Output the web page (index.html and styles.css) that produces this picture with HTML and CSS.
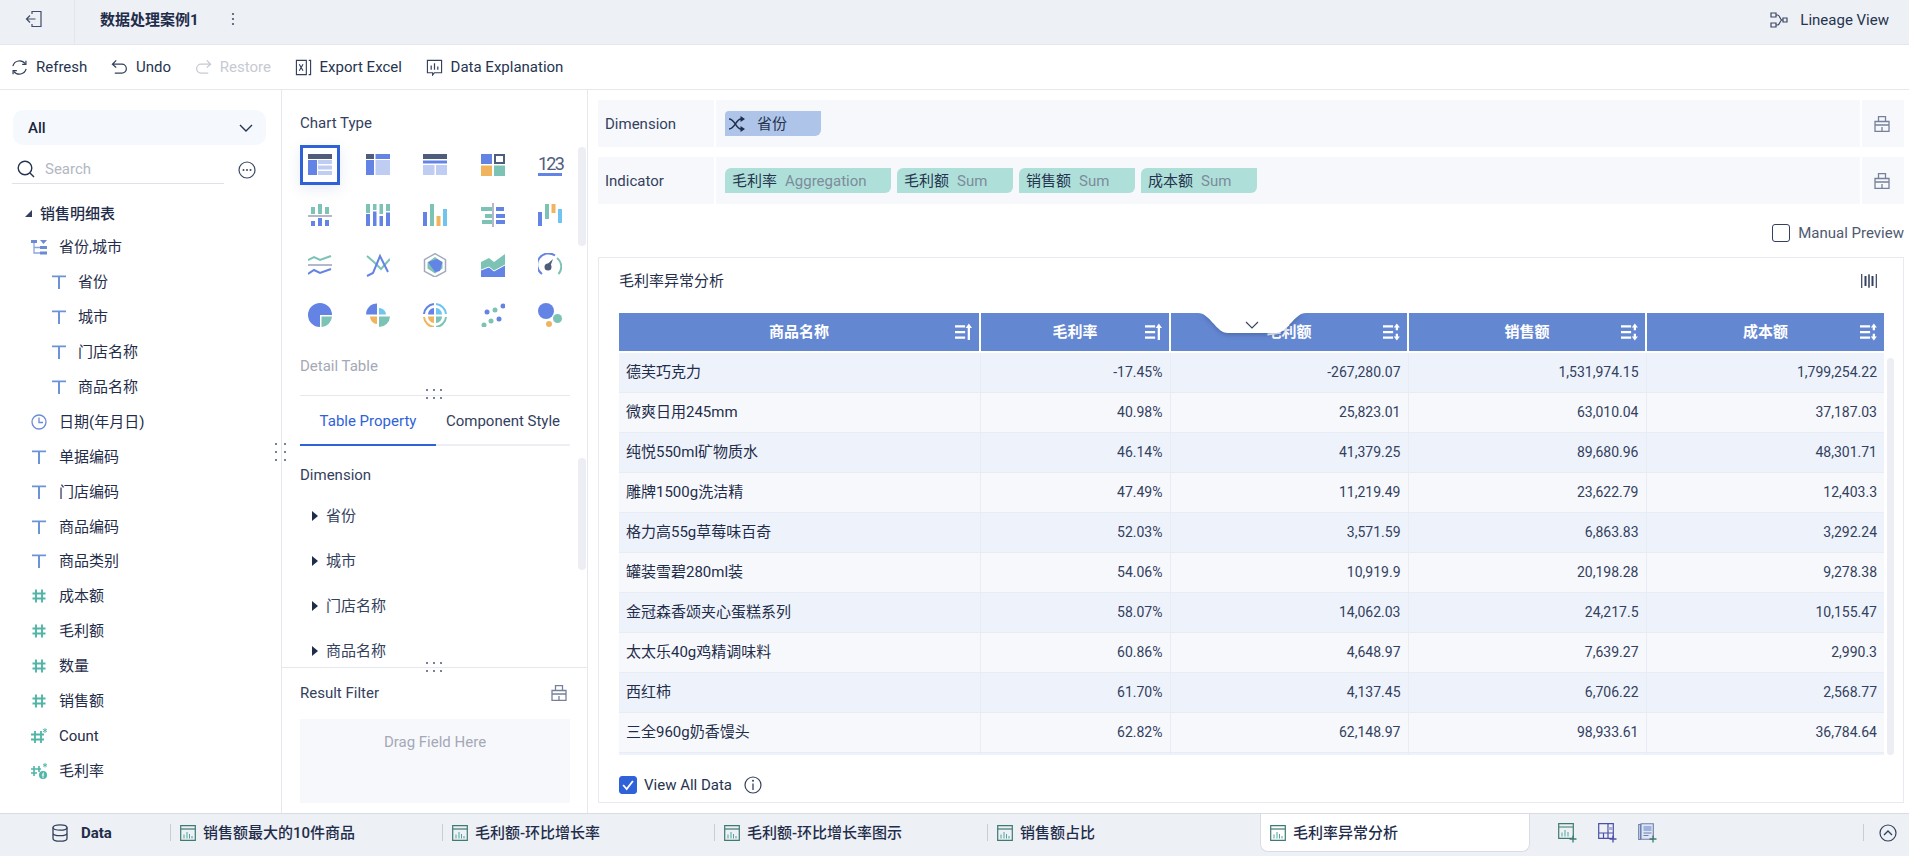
FILE: index.html
```html
<!DOCTYPE html>
<html lang="zh">
<head>
<meta charset="utf-8">
<title>数据处理案例1</title>
<link rel="stylesheet" href="styles.css">
</head>
<body>
<svg class="sprite" aria-hidden="true">
  <symbol id="i-t" viewBox="0 0 16 16"><path d="M1 1.500h14v1.700H1zM7 3h2v12H7z" fill="#6b94d8"/></symbol>
  <symbol id="i-hash" viewBox="0 0 16 16"><path d="M5 1.500v13M11 1.500v13M1.500 5.500h13M1.500 10.500h13" stroke="#4fb5a6" stroke-width="1.900" fill="none"/></symbol>
  <symbol id="i-box" viewBox="0 0 16 16"><path d="M1 5.500h14v9.800H1zM4.500 5.500V.7h7v4.800M1 9h14M8 11v4.300" stroke="#76809a" stroke-width="1.300" fill="none"/></symbol>
  <symbol id="i-tab" viewBox="0 0 16 16"><path d="M.7.7h14.600v14.600H.7z" fill="none" stroke="#3f7a72" stroke-width="1.200"/><path d="M.7 4h14.600" stroke="#3f7a72" stroke-width="1.200"/><path d="M3.500 9.500h1v4h-1zM6.500 7h1v6.500h-1zM9 9h1v4.500H9zM11.500 11h1v2.500h-1z" fill="#4fa79b"/></symbol>
  <symbol id="i-up" viewBox="0 0 16 16"><path d="M0 2h9v2H0zM0 7h9v2H0zM0 12h9v2H0z" fill="#fff"/><path d="M11.300 15V4.500H9.500L12.300.5 15.100 4.500h-1.800V15z" fill="#fff"/></symbol>
  <symbol id="i-both" viewBox="0 0 16 16"><path d="M0 2h9v2H0zM0 7h9v2H0zM0 12h9v2H0z" fill="#fff"/><path d="M12.300.5 15 4h-1.700v2.500h-2V4H9.600zM12.300 15.500 9.600 12h1.700V9.500h2V12H15z" fill="#fff"/></symbol>
</svg>

<header class="topbar">
  <div class="back">
    <svg class="ic18" viewBox="0 0 18 18"><path d="M7 4V1.500h9v15H7V14M1.500 9h9M5 5.500 1.500 9 5 12.500" fill="none" stroke="#3f4d68" stroke-width="1.200"/></svg>
  </div>
  <div class="doc-title">数据处理案例1</div>
  <svg class="doc-more" viewBox="0 0 4 14"><circle cx="2" cy="2" r="1.100" fill="#46536e"/><circle cx="2" cy="7" r="1.100" fill="#46536e"/><circle cx="2" cy="12" r="1.100" fill="#46536e"/></svg>
  <div class="lineage">
    <svg class="ic18" viewBox="0 0 18 18"><path d="M1 2h5v4H1zM1 12h5v4H1zM13 7h4v4h-4zM6 4h1.500c2.500 0 2.500 5 4.500 5h1M6 14h1.500c2.500 0 2.500-5 4.500-5" fill="none" stroke="#3a4864" stroke-width="1.200"/></svg>
    <span>Lineage View</span>
  </div>
</header>

<nav class="toolbar">
  <div class="tool"><svg class="ic17" viewBox="0 0 18 18"><path d="M2 7.500A7.300 7.300 0 0 1 15 5M16 10.500A7.300 7.300 0 0 1 3 13" fill="none" stroke="#33415e" stroke-width="1.300"/><path d="M15.800 1.800v4h-4M2.200 16.200v-4h4" fill="none" stroke="#33415e" stroke-width="1.300"/></svg><span>Refresh</span></div>
  <div class="tool"><svg class="ic17" viewBox="0 0 18 18"><path d="M5.500 1.500 1.500 5.500l4 3.500M1.500 5.500h10a4.700 4.700 0 0 1 0 9.500H4" fill="none" stroke="#33415e" stroke-width="1.300"/></svg><span>Undo</span></div>
  <div class="tool off"><svg class="ic17" viewBox="0 0 18 18"><path d="M12.500 1.500l4 4-4 3.500M16.500 5.500h-10a4.700 4.700 0 0 0 0 9.500H14" fill="none" stroke="#c6cad3" stroke-width="1.300"/></svg><span>Restore</span></div>
  <div class="tool"><svg class="ic17" viewBox="0 0 18 18"><path d="M12 1.500H1.500v15H12zM14.500 1.500h2v15h-2" fill="none" stroke="#33415e" stroke-width="1.200"/><path d="M4.500 5.500l4 7M8.500 5.500l-4 7" fill="none" stroke="#33415e" stroke-width="1.200"/></svg><span>Export Excel</span></div>
  <div class="tool"><svg class="ic17" viewBox="0 0 18 18"><path d="M1.500 1.500h15v13H9l-2 2.500v-2.500H1.500z" fill="none" stroke="#33415e" stroke-width="1.200"/><path d="M5.500 7v4.500M9 4.500v7M12.500 8v3.500" stroke="#33415e" stroke-width="1.300"/></svg><span>Data Explanation</span></div>
</nav>

<main class="workspace">
  <aside class="fields">
    <div class="select"><span>All</span><svg class="chev" viewBox="0 0 14 8"><path d="M1 1l6 6 6-6" fill="none" stroke="#263450" stroke-width="1.400"/></svg></div>
    <div class="search-row">
      <div class="search">
        <svg class="ic18" viewBox="0 0 18 18"><circle cx="8" cy="8" r="6.800" fill="none" stroke="#263450" stroke-width="1.400"/><path d="M13 13l4 4" stroke="#263450" stroke-width="1.400"/></svg>
        <span>Search</span>
      </div>
      <svg class="more" viewBox="0 0 18 18"><circle cx="9" cy="9" r="8" fill="none" stroke="#3a4864" stroke-width="1.200"/><circle cx="5.500" cy="9" r="1" fill="#3a4864"/><circle cx="9" cy="9" r="1" fill="#3a4864"/><circle cx="12.500" cy="9" r="1" fill="#3a4864"/></svg>
    </div>
    <div class="tree-head"><span class="tri-down"></span><span>销售明细表</span></div>
    <div class="row"><svg class="ic16" viewBox="0 0 16 16"><path d="M0 1h6v3H0zM9 1h7L12.500 5zM9 7h7v3H9zM9 12.500h7v3H9z" fill="#6b8bd6"/><path d="M3 4v10h6M3 8.500h6" fill="none" stroke="#8ba4e2" stroke-width="1.300"/></svg><span>省份,城市</span></div>
    <div class="row sub"><svg class="ic16"><use href="#i-t"/></svg><span>省份</span></div>
    <div class="row sub"><svg class="ic16"><use href="#i-t"/></svg><span>城市</span></div>
    <div class="row sub"><svg class="ic16"><use href="#i-t"/></svg><span>门店名称</span></div>
    <div class="row sub"><svg class="ic16"><use href="#i-t"/></svg><span>商品名称</span></div>
    <div class="row"><svg class="ic16" viewBox="0 0 16 16"><circle cx="8" cy="8" r="7" fill="none" stroke="#6b8bd6" stroke-width="1.300"/><path d="M8 3.500V8.500h4" fill="none" stroke="#6b8bd6" stroke-width="1.300"/></svg><span>日期(年月日)</span></div>
    <div class="row"><svg class="ic16"><use href="#i-t"/></svg><span>单据编码</span></div>
    <div class="row"><svg class="ic16"><use href="#i-t"/></svg><span>门店编码</span></div>
    <div class="row"><svg class="ic16"><use href="#i-t"/></svg><span>商品编码</span></div>
    <div class="row"><svg class="ic16"><use href="#i-t"/></svg><span>商品类别</span></div>
    <div class="row"><svg class="ic16"><use href="#i-hash"/></svg><span>成本额</span></div>
    <div class="row"><svg class="ic16"><use href="#i-hash"/></svg><span>毛利额</span></div>
    <div class="row"><svg class="ic16"><use href="#i-hash"/></svg><span>数量</span></div>
    <div class="row"><svg class="ic16"><use href="#i-hash"/></svg><span>销售额</span></div>
    <div class="row"><svg class="ic16" viewBox="0 0 16 16"><path d="M4 3v12M10 3v12M0 6.500h13M0 11.500h13" stroke="#4fb5a6" stroke-width="1.800" fill="none"/><path d="M14 0v5M11.800 1.200l4.400 2.600M16.200 1.200l-4.400 2.600" stroke="#4fb5a6" stroke-width=".9"/></svg><span>Count</span></div>
    <div class="row"><svg class="ic16" viewBox="0 0 16 16"><path d="M3 3v10M8 3v6M0 6h10M0 10h6" stroke="#4fb5a6" stroke-width="1.600" fill="none"/><path d="M14 0v4.500M12 1l4 2.400M16 1l-4 2.400" stroke="#4fb5a6" stroke-width=".9"/><circle cx="12" cy="12" r="4" fill="#4fb5a6"/><path d="M13 10h-1v5M10.800 12h2.400" stroke="#fff" stroke-width=".9" fill="none"/></svg><span>毛利率</span></div>
    <div class="grip grip-v"><i></i><i></i><i></i><i></i><i></i><i></i></div>
  </aside>

  <section class="config">
    <div class="config-top">
      <h4 class="sec-label">Chart Type</h4>
      <div class="charts">
        <div class="chart sel"><svg viewBox="0 0 24 24"><path d="M0 1h24v5H0z" fill="#4f5d7c"/><path d="M0 7h9v15H0z" fill="#6384e4"/><path d="M10 7h14v4H10zM10 12.500h14v4H10zM10 18h14v4H10z" fill="#c0cdf3"/></svg></div>
        <div class="chart"><svg viewBox="0 0 24 24"><path d="M0 1h8v5H0z" fill="#4f5d7c"/><path d="M9.500 1H24v5H9.500zM0 7h8v15H0z" fill="#6384e4"/><path d="M9.500 7H24v15H9.500z" fill="#c0cdf3"/></svg></div>
        <div class="chart"><svg viewBox="0 0 24 24"><path d="M0 1h24v5H0z" fill="#4f5d7c"/><path d="M0 7.500h24v3H0z" fill="#6384e4"/><path d="M0 12h11.500v10H0zM13 12h11v10H13z" fill="#c0cdf3"/></svg></div>
        <div class="chart"><svg viewBox="0 0 24 24"><path d="M0 1h11v10H0z" fill="#6384e4"/><path d="M13 1h11v10H13zM15 3v6h7V3z" fill="#4f5d7c" fill-rule="evenodd"/><path d="M0 12.500h11V23H0z" fill="#f0b45f"/><path d="M13 12.500h11V23H13z" fill="#7cc2b5"/></svg></div>
        <div class="chart"><span class="num">123</span></div>
        <div class="chart"><svg viewBox="0 0 24 24"><path d="M3 4h4v7H3zM10 1h4v10h-4zM17 4h4v7h-4z" fill="#7cc2b5"/><path d="M0 12h24v2H0z" fill="#b3b9ca"/><path d="M3 18h4v5H3zM10 15h4v8h-4zM17 17h4v6h-4z" fill="#6384e4"/></svg></div>
        <div class="chart"><svg viewBox="0 0 24 24"><path d="M0 1h4v9H0zM7 1h3.500v6H7zM13.500 1H17v10h-3.500zM20 1h4v7h-4z" fill="#7cc2b5"/><path d="M0 11h4v12H0zM7 8.500h3.500V23H7zM13.500 13H17v10h-3.500zM20 9.500h4V23h-4z" fill="#6384e4"/></svg></div>
        <div class="chart"><svg viewBox="0 0 24 24"><path d="M0 9h4v14H0z" fill="#6384e4"/><path d="M7 1h4v22H7z" fill="#7cc2b5"/><path d="M13.500 13h4v10h-4z" fill="#f0b45f"/><path d="M20 6h4v17h-4z" fill="#6fc4f0"/></svg></div>
        <div class="chart"><svg viewBox="0 0 24 24"><path d="M0 4h11v4H0zM4 11h7v4H4zM1 17h10v4H1z" fill="#7cc2b5"/><path d="M11 0h2v24h-2z" fill="#b3b9ca"/><path d="M15 4h8v4h-8zM15 11h10v4H15zM15 17h9v4h-9z" fill="#6384e4"/></svg></div>
        <div class="chart"><svg viewBox="0 0 24 24"><path d="M0 9h4v14H0z" fill="#6384e4"/><path d="M7 1h4v15H7z" fill="#7cc2b5"/><path d="M13.500 1h4v9h-4z" fill="#f0b45f"/><path d="M20 6h4v14h-4z" fill="#6fc4f0"/></svg></div>
        <div class="chart"><svg viewBox="0 0 24 24"><path d="M0 7l6-3 6 3 11-4" fill="none" stroke="#7cc2b5" stroke-width="2"/><path d="M0 12h24" stroke="#b3b9ca" stroke-width="2"/><path d="M0 21l6-4 6 3 11-4" fill="none" stroke="#6384e4" stroke-width="2"/></svg></div>
        <div class="chart"><svg viewBox="0 0 24 24"><path d="M1 3l8 7 6 6 9-10" fill="none" stroke="#7cc2b5" stroke-width="2"/><path d="M1 23l6-3 7-17 8 16" fill="none" stroke="#6384e4" stroke-width="2"/></svg></div>
        <div class="chart"><svg viewBox="0 0 24 24"><path d="M12 .7l10.500 6v11.600L12 24 1.500 18.300V6.700z" fill="none" stroke="#a3aabd" stroke-width="1.500"/><path d="M12 4l7.500 5.500v6l-7.500 5-7.500-5v-6z" fill="#7cc2b5"/><path d="M5 9l9-3 5.500 3-2.500 9-5 1z" fill="#6384e4"/></svg></div>
        <div class="chart"><svg viewBox="0 0 24 24"><path d="M0 9l8-4 5 4 11-8v12l-11 6-5-4-8 3z" fill="#7cc2b5"/><path d="M0 24v-7l8-3 5 4 11-6v12z" fill="#6384e4"/><path d="M0 17l8-3 5 4 11-6" fill="none" stroke="#fff"/></svg></div>
        <div class="chart"><svg viewBox="0 0 24 24"><path d="M4 21A11 11 0 0 1 17 2.500" fill="none" stroke="#6384e4" stroke-width="2"/><path d="M19 5a11 11 0 0 1 1.500 16" fill="none" stroke="#7cc2b5" stroke-width="2"/><circle cx="10" cy="14" r="3.500" fill="#4f5d7c"/><path d="M8.500 12l6.500-6-3 8z" fill="#4f5d7c"/></svg></div>
        <div class="chart"><svg viewBox="0 0 24 24"><path d="M24 12A12 12 0 1 0 12 24V12z" fill="#6384e4"/><path d="M13.500 13.500H24A11 11 0 0 1 13.500 24z" fill="#7cc2b5"/></svg></div>
        <div class="chart"><svg viewBox="0 0 24 24"><path d="M11 .5V11.500H0A11 11 0 0 1 11 .5z" fill="#6384e4"/><path d="M13 5a7 7 0 0 1 7 6.500h-7z" fill="#6fc4f0"/><path d="M4 13.500h7V21a7.500 7.500 0 0 1-7-7.500z" fill="#f0b45f"/><path d="M13 13.500h11A11 11 0 0 1 13 24z" fill="#7cc2b5"/></svg></div>
        <div class="chart"><svg viewBox="0 0 24 24"><path d="M1 11A11 11 0 0 1 11 1" fill="none" stroke="#6384e4" stroke-width="2"/><path d="M13 1a11 11 0 0 1 10 10" fill="none" stroke="#6fc4f0" stroke-width="2"/><path d="M23 14a11 11 0 0 1-10 10" fill="none" stroke="#7cc2b5" stroke-width="2"/><path d="M1 14a11 11 0 0 0 10 10" fill="none" stroke="#f0b45f" stroke-width="2"/><path d="M11 5v6.500H5A6.500 6.500 0 0 1 11 5z" fill="#6384e4"/><path d="M13 5a6.500 6.500 0 0 1 6 6.500h-6z" fill="#6fc4f0"/><path d="M5 13.500h6V20a6.500 6.500 0 0 1-6-6.500z" fill="#f0b45f"/><path d="M13 13.500h6A6.500 6.500 0 0 1 13 20z" fill="#7cc2b5"/></svg></div>
        <div class="chart"><svg viewBox="0 0 24 24"><circle cx="22" cy="3" r="2.500" fill="#6384e4"/><circle cx="14" cy="7" r="2.500" fill="#7cc2b5"/><circle cx="6" cy="9" r="2.500" fill="#6384e4"/><circle cx="18" cy="16" r="2.500" fill="#6384e4"/><circle cx="10" cy="18" r="2.500" fill="#7cc2b5"/><circle cx="3" cy="22" r="2.500" fill="#7cc2b5"/></svg></div>
        <div class="chart"><svg viewBox="0 0 24 24"><circle cx="8" cy="8" r="8" fill="#6384e4"/><circle cx="19.500" cy="15.500" r="4.500" fill="#7cc2b5"/><circle cx="11" cy="21" r="3" fill="#f0b45f"/></svg></div>
      </div>
      <div class="detail">Detail Table</div>
      <div class="track track-a"></div>
    </div>
    <div class="config-mid">
      <div class="tabs"><div class="tab active">Table Property</div><div class="tab">Component Style</div></div>
      <h4 class="sec-label dim-label">Dimension</h4>
      <div class="dim"><span class="tri"></span>省份</div>
      <div class="dim"><span class="tri"></span>城市</div>
      <div class="dim"><span class="tri"></span>门店名称</div>
      <div class="dim"><span class="tri"></span>商品名称</div>
      <div class="track track-b"></div>
      <div class="grip grip-h grip-1"><i></i><i></i><i></i><i></i><i></i><i></i></div>
    </div>
    <div class="config-bot">
      <div class="filter-head"><span>Result Filter</span><svg class="ic16"><use href="#i-box"/></svg></div>
      <div class="dropzone">Drag Field Here</div>
      <div class="grip grip-h grip-2"><i></i><i></i><i></i><i></i><i></i><i></i></div>
    </div>
  </section>

  <section class="canvas">
    <div class="well">
      <div class="well-label">Dimension</div>
      <div class="well-body"><div class="chip dim-chip"><svg class="ic16" viewBox="0 0 16 16"><path d="M0 3c6 0 7 10 12 10M0 13c6 0 7-10 12-10" fill="none" stroke="#1f2d4a" stroke-width="1.500"/><path d="M11.500 0l4.500 3-4.500 3zM11.500 10l4.500 3-4.500 3z" fill="#1f2d4a"/></svg><span>省份</span></div></div>
      <div class="well-end"><svg class="ic16"><use href="#i-box"/></svg></div>
    </div>
    <div class="well">
      <div class="well-label">Indicator</div>
      <div class="well-body">
        <div class="chip w-a">毛利率<em>Aggregation</em></div>
        <div class="chip w-b">毛利额<em>Sum</em></div>
        <div class="chip w-b">销售额<em>Sum</em></div>
        <div class="chip w-b">成本额<em>Sum</em></div>
      </div>
      <div class="well-end"><svg class="ic16"><use href="#i-box"/></svg></div>
    </div>
    <div class="preview"><span class="check"></span><span>Manual Preview</span></div>
    <div class="card">
      <div class="card-head"><span>毛利率异常分析</span>
        <svg class="ic16" viewBox="0 0 16 16"><path d="M.7 1v14M15.300 1v14" stroke="#33415e" stroke-width="1.200"/><path d="M4.500 3v10M8 1.500v13M11.500 3v10" stroke="#33415e" stroke-width="2"/><path d="M8 1.500v13" stroke="#8d97ad" stroke-width="1"/></svg>
      </div>
      <div class="table-area">
        <div class="table-clip">
          <table class="data">
            <colgroup><col class="c1"><col class="c2"><col class="c3"><col class="c4"><col class="c5"></colgroup>
            <thead><tr>
              <th><span>商品名称</span><svg class="sort"><use href="#i-up"/></svg></th>
              <th><span>毛利率</span><svg class="sort"><use href="#i-up"/></svg></th>
              <th><span>毛利额</span><svg class="sort"><use href="#i-both"/></svg></th>
              <th><span>销售额</span><svg class="sort"><use href="#i-both"/></svg></th>
              <th><span>成本额</span><svg class="sort"><use href="#i-both"/></svg></th>
            </tr></thead>
            <tbody>
              <tr><td>德芙巧克力</td><td>-17.45%</td><td>-267,280.07</td><td>1,531,974.15</td><td>1,799,254.22</td></tr>
              <tr><td>微爽日用245mm</td><td>40.98%</td><td>25,823.01</td><td>63,010.04</td><td>37,187.03</td></tr>
              <tr><td>纯悦550ml矿物质水</td><td>46.14%</td><td>41,379.25</td><td>89,680.96</td><td>48,301.71</td></tr>
              <tr><td>雕牌1500g洗洁精</td><td>47.49%</td><td>11,219.49</td><td>23,622.79</td><td>12,403.3</td></tr>
              <tr><td>格力高55g草莓味百奇</td><td>52.03%</td><td>3,571.59</td><td>6,863.83</td><td>3,292.24</td></tr>
              <tr><td>罐装雪碧280ml装</td><td>54.06%</td><td>10,919.9</td><td>20,198.28</td><td>9,278.38</td></tr>
              <tr><td>金冠森香颂夹心蛋糕系列</td><td>58.07%</td><td>14,062.03</td><td>24,217.5</td><td>10,155.47</td></tr>
              <tr><td>太太乐40g鸡精调味料</td><td>60.86%</td><td>4,648.97</td><td>7,639.27</td><td>2,990.3</td></tr>
              <tr><td>西红柿</td><td>61.70%</td><td>4,137.45</td><td>6,706.22</td><td>2,568.77</td></tr>
              <tr><td>三全960g奶香馒头</td><td>62.82%</td><td>62,148.97</td><td>98,933.61</td><td>36,784.64</td></tr>
              <tr><td></td><td></td><td></td><td></td><td></td></tr>
            </tbody>
          </table>
          <svg class="pull" viewBox="0 0 116 26"><path d="M4 0H112C100 0 94 20 82 20H34C22 20 16 0 4 0z" fill="#fff"/><path d="M52 9l6 6 6-6" fill="none" stroke="#33415e" stroke-width="1.100"/></svg>
        </div>
        <div class="track track-c"></div>
      </div>
      <div class="card-foot">
        <span class="check on"><svg viewBox="0 0 18 18"><path d="M3.500 9l4 4.500 7-9" fill="none" stroke="#fff" stroke-width="2"/></svg></span>
        <span>View All Data</span>
        <svg class="ic18" viewBox="0 0 18 18"><circle cx="9" cy="9" r="8" fill="none" stroke="#33415e" stroke-width="1.200"/><path d="M9 7.500V14" stroke="#33415e" stroke-width="1.300"/><circle cx="9" cy="4.800" r="1" fill="#33415e"/></svg>
      </div>
    </div>
  </section>
</main>

<footer class="sheets">
  <div class="sheet-data"><svg class="ic18" viewBox="0 0 18 18"><ellipse cx="9" cy="3.500" rx="7" ry="2.700" fill="none" stroke="#33415e" stroke-width="1.300"/><path d="M2 3.500v11c0 1.500 3 2.700 7 2.700s7-1.200 7-2.700v-11M2 9c0 1.500 3 2.700 7 2.700s7-1.200 7-2.700" fill="none" stroke="#33415e" stroke-width="1.300"/></svg><span>Data</span></div>
  <div class="sheet s1"><svg class="ic16"><use href="#i-tab"/></svg><span>销售额最大的10件商品</span></div>
  <div class="sheet s2"><svg class="ic16"><use href="#i-tab"/></svg><span>毛利额-环比增长率</span></div>
  <div class="sheet s3"><svg class="ic16"><use href="#i-tab"/></svg><span>毛利额-环比增长率图示</span></div>
  <div class="sheet s4"><svg class="ic16"><use href="#i-tab"/></svg><span>销售额占比</span></div>
  <div class="sheet current"><svg class="ic16"><use href="#i-tab"/></svg><span>毛利率异常分析</span></div>
  <div class="sheet-add">
    <svg class="ic20" viewBox="0 0 20 20"><path d="M.7.7h14.600v14.600H.7zM.7 4h14.600" fill="none" stroke="#3f7a72" stroke-width="1.200"/><path d="M3.500 9.500h1v4h-1zM6.500 7h1v6.500h-1zM9.500 9h1v4.500h-1z" fill="#4fa79b"/><path d="M15 12.500v7M11.500 16h7" stroke="#3f7a72" stroke-width="1.300"/></svg>
    <svg class="ic20" viewBox="0 0 20 20"><path d="M.7.7h14.600v14.600H.7zM.7 10h14.600M10 .7v14.600M5.500 10v5.300" fill="none" stroke="#4d4fa8" stroke-width="1.200"/><path d="M10.500 4h4.500v3h-4.500z" fill="#aab0dc"/><path d="M15 12.500v7M11.500 16h7" stroke="#4d4fa8" stroke-width="1.300"/></svg>
    <svg class="ic20" viewBox="0 0 20 20"><path d="M.7 1.500h1.800v15H.7zM3 .7h12.300v15.500H3z" fill="#dfe5f2" stroke="#6b80ad" stroke-width="1.100"/><path d="M5.500 3h8v5h-8z" fill="#9cb2e0"/><path d="M5.500 10h8M5.500 12.500h5" stroke="#6b80ad" stroke-width="1.200"/><path d="M15 12.500v7M11.500 16h7" stroke="#3f7a72" stroke-width="1.300"/></svg>
  </div>
  <div class="sheet-fold"><svg class="ic18" viewBox="0 0 18 18"><circle cx="9" cy="9" r="8" fill="none" stroke="#33415e" stroke-width="1.200"/><path d="M5 11l4-4 4 4" fill="none" stroke="#33415e" stroke-width="1.300"/></svg></div>
</footer>
</body>
</html>
```

FILE: styles.css
```css
* { box-sizing: border-box; }
html, body { margin: 0; height: 100%; }
body {
  width: 1909px; height: 856px; overflow: hidden;
  display: flex; flex-direction: column;
  font: 15px/20px Roboto, "Noto Sans CJK SC", sans-serif;
  color: #1f2d4a; background: #fff;
}
.sprite { display: none; }
svg { display: block; flex: none; }
.ic16 { width: 16px; height: 16px; }
.ic17 { width: 17px; height: 17px; }
.ic18 { width: 18px; height: 18px; }
.ic20 { width: 20px; height: 20px; }
h4 { margin: 0; font-weight: 400; }

.topbar {
  height: 45px; flex: none; display: flex; align-items: center;
  background: #edf0f5; border-bottom: 1px solid #e3e6ed;
}
.back { width: 75px; height: 44px; display: flex; align-items: center; padding: 0 0 6px 25px; border-right: 1px solid #e3e6ed; }
.doc-title { margin: 0 0 5px 25px; width: 120px; font-weight: 700; color: #1f2d4a; }
.doc-more { width: 4px; height: 14px; margin: 0 0 6px 11px; }
.lineage { margin: 0 20px 5px auto; display: flex; align-items: center; gap: 12px; color: #26344f; }

.toolbar {
  height: 45px; flex: none; display: flex; align-items: center; gap: 23.7px; padding-left: 11px;
  border-bottom: 1px solid #e6e8ee;
}
.tool { display: flex; align-items: center; gap: 8px; color: #26344f; }
.tool.off { color: #c6cad3; }

.workspace { flex: 1; min-height: 0; display: flex; }

.fields { width: 282px; flex: none; position: relative; border-right: 1px solid #e6e8ef; padding: 20px 0 0 13px; }
.select {
  width: 253px; height: 35px; display: flex; align-items: center; justify-content: space-between;
  padding: 0 13px 0 15px; background: #f5f9fe; border-radius: 10px; font-weight: 500; color: #1a2740;
}
.chev { width: 14px; height: 8px; }
.search-row { display: flex; align-items: center; margin-top: 10px; height: 29px; margin-left: -1px; }
.search {
  width: 212px; height: 29px; display: flex; align-items: center; gap: 10px; padding-left: 5px;
  border-bottom: 1px solid #e0e2ea; color: #b2b7c4;
}
.more { width: 18px; height: 18px; margin-left: 14px; }
.tree-head { height: 33px; margin-top: 13px; display: flex; align-items: center; gap: 8px; padding-left: 12px; font-weight: 500; }
.tri-down { width: 0; height: 0; border-left: 7px solid transparent; border-bottom: 7px solid #33415e; }
.row { height: 34.9px; display: flex; align-items: center; gap: 12px; padding-left: 18px; }
.row.sub { padding-left: 38px; gap: 11px; }

.grip { position: absolute; display: grid; gap: 5px; }
.grip i { width: 2px; height: 2px; background: #77819a; display: block; }
.grip-v { left: 275px; top: 353px; grid-template-columns: 2px 2px; column-gap: 7px; row-gap: 6px; }
.grip-h { grid-template-columns: 2px 2px 2px; column-gap: 5px; row-gap: 6px; }
.grip-1 { left: 144px; top: -6px; }
.grip-2 { left: 144px; top: -6px; }

.config { width: 306px; flex: none; display: flex; flex-direction: column; border-right: 1px solid #e6e8ef; }
.config-top { position: relative; padding: 23px 0 0 18px; height: 305px; }
.sec-label { color: #33415e; }
.charts { margin-top: 12px; display: grid; grid-template-columns: repeat(5, 40px); column-gap: 17.5px; grid-auto-rows: 40px; row-gap: 10px; }
.chart { display: flex; align-items: center; justify-content: center; }
.chart svg { width: 24px; height: 24px; }
.chart.sel { border: 3px solid #2f62d9; box-shadow: 0 4px 14px rgba(60, 90, 160, .12); background: #fff; }
.num { width: 24px; font-size: 18px; line-height: 19px; text-align: center; white-space: nowrap; color: #4f5d7c; border-bottom: 3px solid #6384e4; letter-spacing: -1.8px; }
.detail { margin-top: 21px; color: #a4a9b6; }
.track { position: absolute; width: 8px; background: #eceef3; border-radius: 4px; }
.track-a { left: 296px; top: 57px; height: 99px; }
.track-b { left: 296px; top: 63px; height: 112px; }
.track-c { position: static; margin-top: 45px; height: 397px; }

.config-mid { position: relative; height: 273px; padding-left: 18px; border-bottom: 1px solid #e6e8ef; }
.tabs { width: 270px; height: 51px; display: flex; border-top: 1px solid #e6e8ef; border-bottom: 2px solid #edeff4; }
.tab { flex: 1; padding-top: 15px; text-align: center; white-space: nowrap; color: #33415e; height: 50px; }
.tab.active { flex: none; width: 136px; color: #2f62d9; border-bottom: 2px solid #2f62d9; }
.dim-label { margin-top: 19px; height: 20px; }
.dim { height: 45px; display: flex; align-items: center; gap: 8px; padding-left: 12px; color: #33415e; position: relative; top: 8px; }
.tri { width: 0; height: 0; border-left: 6px solid #1f2d4a; border-top: 5px solid transparent; border-bottom: 5px solid transparent; }

.config-bot { position: relative; flex: 1; padding: 15px 18px 0; }
.filter-head { height: 20px; display: flex; justify-content: space-between; align-items: center; padding-right: 2px; color: #33415e; }
.dropzone { margin-top: 16px; width: 270px; height: 84px; padding-top: 13px; background: #f7f8fc; text-align: center; color: #a4a9b6; }

.canvas { flex: 1; min-width: 0; padding: 10px 5px 0 10px; display: flex; flex-direction: column; }
.well { height: 47px; flex: none; display: flex; background: #f7f8fc; margin-bottom: 10px; }
.well-label { width: 118px; display: flex; align-items: center; padding-left: 7px; border-right: 2px solid #fff; color: #33415e; }
.well-body { flex: 1; display: flex; align-items: center; gap: 6px; padding-left: 9px; }
.well-end { width: 44px; display: flex; align-items: center; justify-content: center; border-left: 2px solid #fff; padding-right: 2px; }
.chip { height: 25px; display: flex; align-items: center; padding-left: 7px; background: #aee0d9; border-radius: 6px 0 6px 0; color: #26344f; }
.chip em { font-style: normal; color: #7d8b9b; margin-left: 8px; }
.dim-chip { width: 96px; background: #aec5e9; gap: 12px; padding-left: 4px; border-radius: 4px 0 6px 0; }
.w-a { width: 166px; }
.w-b { width: 116px; }

.preview { height: 18px; margin-top: 10px; flex: none; display: flex; align-items: center; justify-content: flex-end; gap: 8px; color: #4f5a70; }
.check { width: 18px; height: 18px; border: 1px solid #33415e; border-radius: 3px; display: block; }
.check.on { background: #2f62d9; border-color: #2f62d9; }

.card { margin-top: 15px; height: 546px; flex: none; border: 1px solid #e8eaef; padding: 0 9px 0 20px; }
.card-head { height: 55px; display: flex; align-items: center; justify-content: space-between; padding: 0 17px 9px 0; }
.table-area { display: flex; gap: 3px; height: 442px; }
.table-clip { width: 1265px; height: 442px; overflow: hidden; position: relative; flex: none; }
.data { width: 1265px; table-layout: fixed; border-collapse: collapse; }
.c1 { width: 361px; } .c2 { width: 190px; } .c3 { width: 238px; } .c4 { width: 238px; } .c5 { width: 238px; }
th { position: relative; height: 39px; padding: 0; background: #6487d2; color: #fff; font-weight: 700; text-align: center; border-right: 2px solid #fff; border-bottom: 2px solid #fff; }
th:last-child { border-right: 0; }
.sort { position: absolute; right: 6px; top: 10px; width: 18px; height: 18px; }
td { height: 40px; padding: 0 7px; font-size: 14px; text-align: right; color: #33415e; border-right: 1px solid #e8edf5; border-bottom: 1px solid #e8edf5; background: #f6f8fc; }
td:first-child { font-size: 15px; text-align: left; color: #1f2d4a; }
td:last-child { border-right: 0; }
tbody tr:nth-child(odd) td { background: #eef3fb; }
.pull { position: absolute; left: 575px; top: 0; width: 116px; height: 26px; filter: drop-shadow(0 2px 2px rgba(40, 60, 110, .35)); }
.card-foot { height: 48px; display: flex; align-items: center; gap: 7px; color: #26344f; padding-top: 12px; }
.card-foot .ic18 { margin-left: 5px; }

.sheets { height: 43px; flex: none; display: flex; align-items: flex-start; background: #edf0f5; border-top: 1px solid #d9dce4; font-weight: 500; }
.sheet-data { width: 170px; height: 38px; padding-left: 51px; display: flex; align-items: center; gap: 12px; font-weight: 700; }
.sheet { height: 38px; display: flex; align-items: center; gap: 7px; padding-left: 10px; position: relative; color: #1f2d4a; }
.sheet::before { content: ""; position: absolute; left: 0; top: 10px; height: 17px; width: 1px; background: #c9cdd6; }
.s1 { width: 272px; } .s2 { width: 272px; } .s3 { width: 273px; } .s4 { width: 273px; }
.sheet.current { width: 270px; padding-left: 9px; background: #fff; border-radius: 0 0 8px 8px; border: 1px solid #d9dce4; border-top: 0; }
.sheet.current::before { display: none; }
.sheet-add { display: flex; gap: 20px; padding: 9px 0 0 28px; width: 333px; }
.sheet-fold { height: 38px; display: flex; align-items: center; padding-left: 16px; position: relative; }
.sheet-fold::before { content: ""; position: absolute; left: 0; top: 10px; height: 17px; width: 1px; background: #c9cdd6; }
```
